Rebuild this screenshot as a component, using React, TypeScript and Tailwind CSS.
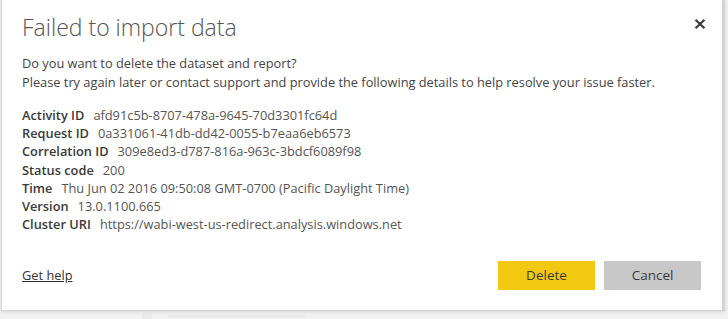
import React from 'react'

const details: [string, string][] = [
  ['Activity ID', 'afd91c5b-8707-478a-9645-70d3301fc64d'],
  ['Request ID', '0a331061-41db-dd42-0055-b7eaa6eb6573'],
  ['Correlation ID', '309e8ed3-d787-816a-963c-3bdcf6089f98'],
  ['Status code', '200'],
  ['Time', 'Thu Jun 02 2016 09:50:08 GMT-0700 (Pacific Daylight Time)'],
  ['Version', '13.0.1100.665'],
  ['Cluster URI', 'https://wabi-west-us-redirect.analysis.windows.net'],
]

const App: React.FC = () => {
  return (
    <div className="w-[728px] h-[319px] bg-[#f1f1f1] overflow-hidden relative font-['Open_Sans',sans-serif]">
      <div className="ml-[1px] w-[724px] h-[311px] bg-white border-l border-r-[3px] border-b border-[#d4d4d4] shadow-[0_1px_3px_rgba(0,0,0,0.12)] flex flex-col pl-[20px] relative z-10">
        <div className="flex items-start justify-between pt-[12px] pr-[16px]">
          <h1 className="text-[23px] leading-[30px] font-light text-[#555]">Failed to import data</h1>
          <button className="mt-[7px]">
            <svg width="12" height="10" viewBox="0 0 12 10">
              <path d="M1.5 0.8 L10.5 9.2 M10.5 0.8 L1.5 9.2" stroke="#3a3a3a" strokeWidth="2.2" strokeLinecap="butt" />
            </svg>
          </button>
        </div>
        <div className="mt-[12px] text-[12.8px] leading-[19px] text-[#444]">
          <p>Do you want to delete the dataset and report?</p>
          <p>Please try again later or contact support and provide the following details to help resolve your issue faster.</p>
        </div>
        <div className="mt-[14px] text-[12.8px] leading-[18.2px] text-[#555]">
          {details.map(([label, value]) => (
            <div key={label}>
              <span className="font-semibold text-[#3a3a3a] mr-[9px]">{label}</span>
              <span>{value}</span>
            </div>
          ))}
        </div>
        <div className="mt-auto mb-[20px] pr-[21px] flex items-center justify-between">
          <a href="#" className="text-[12.8px] text-[#333] underline">Get help</a>
          <div className="flex gap-[9px]">
            <button className="w-[97px] h-[29px] bg-[#f2c811] text-[13.5px] text-[#3a3a3a]">Delete</button>
            <button className="w-[97px] h-[29px] bg-[#c8c8c8] text-[13.5px] text-[#3a3a3a]">Cancel</button>
          </div>
        </div>
      </div>
      <div className="flex items-center gap-[16px] ml-[142px] mt-[2px]">
        <div className="w-[10px] h-[6px] bg-[#e9e9e9]" />
        <div className="w-[138px] h-[4px] bg-[#ebebeb]" />
      </div>
    </div>
  )
}

export default App
